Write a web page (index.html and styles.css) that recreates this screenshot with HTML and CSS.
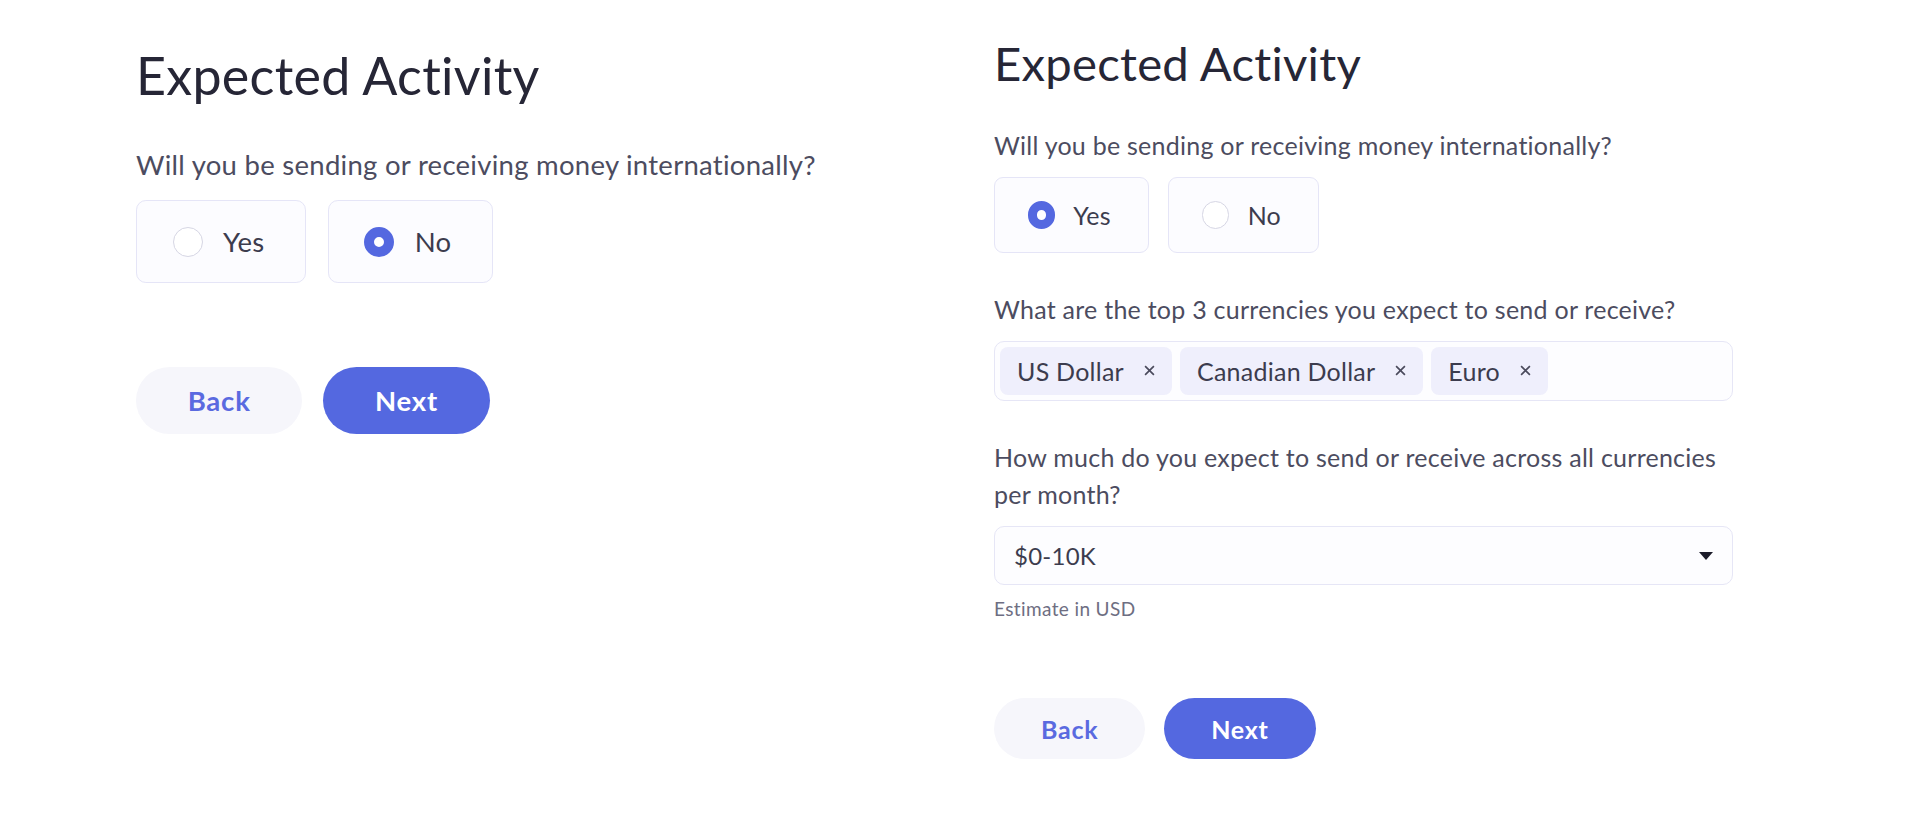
FILE: index.html
```html
<!DOCTYPE html>
<html>
<head>
    <title>Expected Activity</title>
    <link rel="stylesheet" href="styles.css">
</head>
<body>
    <div class="page">
        <section class="activity">
            <h1 class="activity__title">Expected Activity</h1>
            <div class="field">
                <p class="field__label">Will you be sending or receiving money internationally?</p>
                <div class="choice">
                    <label class="choice__option">
                        <span class="choice__dot"></span>
                        Yes
                    </label>
                    <label class="choice__option">
                        <span class="choice__dot choice__dot--checked"></span>
                        No
                    </label>
                </div>
            </div>
            <div class="actions">
                <button class="button button--secondary">Back</button>
                <button class="button button--primary">Next</button>
            </div>
        </section>

        <section class="activity activity--compact">
            <h1 class="activity__title">Expected Activity</h1>
            <div class="field">
                <p class="field__label">Will you be sending or receiving money internationally?</p>
                <div class="choice">
                    <label class="choice__option">
                        <span class="choice__dot choice__dot--checked"></span>
                        Yes
                    </label>
                    <label class="choice__option">
                        <span class="choice__dot"></span>
                        No
                    </label>
                </div>
            </div>
            <div class="field">
                <p class="field__label">What are the top 3 currencies you expect to send or receive?</p>
                <div class="tags">
                    <span class="tags__item">US Dollar
                        <svg class="tags__remove" viewBox="0 0 10 10"><path d="M1 1L9 9M9 1L1 9"/></svg>
                    </span>
                    <span class="tags__item">Canadian Dollar
                        <svg class="tags__remove" viewBox="0 0 10 10"><path d="M1 1L9 9M9 1L1 9"/></svg>
                    </span>
                    <span class="tags__item">Euro
                        <svg class="tags__remove" viewBox="0 0 10 10"><path d="M1 1L9 9M9 1L1 9"/></svg>
                    </span>
                </div>
            </div>
            <div class="field">
                <p class="field__label">How much do you expect to send or receive across all currencies per month?</p>
                <div class="select">
                    <span class="select__value">$0-10K</span>
                    <span class="select__arrow"></span>
                </div>
                <p class="field__hint">Estimate in USD</p>
            </div>
            <div class="actions">
                <button class="button button--secondary">Back</button>
                <button class="button button--primary">Next</button>
            </div>
        </section>
    </div>
</body>
</html>
```

FILE: styles.css
```css
* {
    margin: 0;
    padding: 0;
    box-sizing: border-box;
}

body {
    font-family: Lato, "Noto Sans", sans-serif;
    background: #ffffff;
    color: #4c4c60;
    height: 100vh;
    overflow: hidden;
}

.page {
    display: flex;
    padding-left: 136px;
}

.activity {
    width: 858px;
    font-size: 27.5px;
    letter-spacing: 0.01em;
    padding-top: 44px;
}

.activity--compact {
    width: 739px;
    font-size: 25px;
    padding-top: 35px;
}

.activity__title {
    font-size: 1.89em;
    font-weight: 400;
    line-height: 1.2;
    color: #262636;
    margin-bottom: 0.75em;
}

.field + .field {
    margin-top: 1.53em;
}

.field__label {
    line-height: 1.48;
    margin-bottom: 0.52em;
}

.field__hint {
    font-size: 0.76em;
    line-height: 1.4;
    margin-top: 0.55em;
    letter-spacing: 0.02em;
    color: #6e6e82;
}

.choice {
    display: flex;
    gap: 0.78em;
}

.choice__option {
    display: flex;
    align-items: center;
    gap: 0.74em;
    height: 3.02em;
    padding: 0 1.48em 0 1.3em;
    border: 1px solid #e5e5f7;
    border-radius: 0.36em;
    background: #fcfcff;
    color: #3c3c4e;
}

.choice__dot {
    width: 1.09em;
    height: 1.09em;
    border-radius: 50%;
    border: 1px solid #d6d6e4;
    background: #ffffff;
}

.choice__dot--checked {
    border: 0.38em solid #5468e0;
}

.tags {
    display: flex;
    gap: 0.32em;
    height: 2.4em;
    padding: 5px;
    border: 1px solid #e6e6f6;
    border-radius: 0.4em;
    background: #fdfdff;
}

.tags__item {
    display: flex;
    align-items: center;
    gap: 0.8em;
    padding: 0 0.68em;
    border-radius: 0.32em;
    background: #efeffc;
    color: #3c3c4e;
}

.tags__remove {
    width: 11px;
    height: 11px;
    fill: none;
    stroke: #4a4a5c;
    stroke-width: 1.5;
}

.select {
    display: flex;
    align-items: center;
    justify-content: space-between;
    height: 2.36em;
    padding: 0 19px;
    border: 1px solid #e6e6f6;
    border-radius: 0.4em;
    background: #fdfdff;
    color: #3c3c4e;
}

.select__value {
    font-size: 0.96em;
}

.select__arrow {
    width: 0;
    height: 0;
    border-left: 7px solid transparent;
    border-right: 7px solid transparent;
    border-top: 8px solid #1c1c2a;
}

.actions {
    display: flex;
    gap: 0.76em;
    margin-top: 3.05em;
}

.button {
    width: 6.05em;
    height: 2.44em;
    border: none;
    border-radius: 1.22em;
    font-family: inherit;
    font-size: 1em;
    font-weight: 700;
    letter-spacing: 0.03em;
    cursor: pointer;
}

.button--primary {
    background: #5468e0;
    color: #ffffff;
}

.button--secondary {
    background: #f6f6fb;
    color: #5a6ae0;
}
```
